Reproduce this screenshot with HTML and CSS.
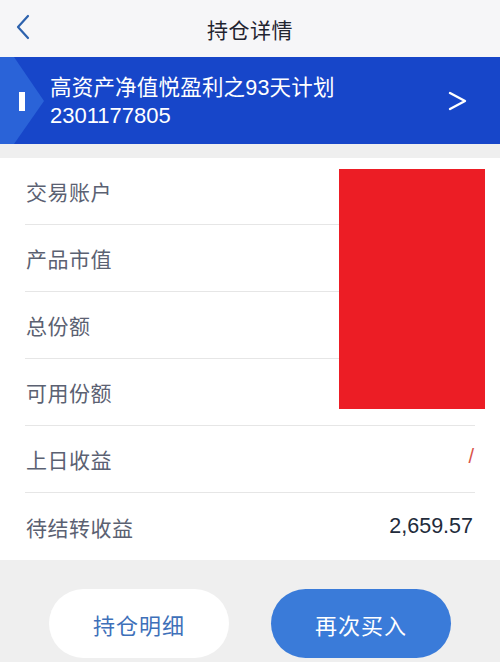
FILE: index.html
```html
<!DOCTYPE html>
<html lang="zh-CN">
<head>
  <meta charset="UTF-8" />
  <meta name="viewport" content="width=device-width, initial-scale=1.0"/>
  <title>持仓详情</title>
  <link rel="stylesheet" href="styles.css">
</head>
<body>
  <div class="navbar">
    <svg class="back" width="14" height="26" viewBox="0 0 14 26">
      <polyline points="12,2 2,13 12,24" fill="none" stroke="#2d62ad" stroke-width="2.2" stroke-linecap="round" stroke-linejoin="round"/>
    </svg>
    <div class="title">持仓详情</div>
  </div>

  <div class="banner">
    <svg class="banner-tab" width="46" height="87" viewBox="0 0 46 87">
      <polygon points="0,0 14,0 44,44 14,87 0,87" fill="#2a63d8"/>
      <rect x="19" y="35" width="6" height="19" fill="#ffffff"/>
    </svg>
    <div class="banner-text">
      <div class="product-name">高资产净值悦盈利之93天计划</div>
      <div class="product-code">2301177805</div>
    </div>
    <svg class="arrow" width="20" height="20" viewBox="0 0 20 20">
      <polyline points="2,2 17,10 2,18" fill="none" stroke="#ffffff" stroke-width="2.4" stroke-linecap="round" stroke-linejoin="round"/>
    </svg>
  </div>

  <div class="list">
    <div class="row"><span class="label">交易账户</span></div>
    <div class="row"><span class="label">产品市值</span></div>
    <div class="row"><span class="label">总份额</span></div>
    <div class="row"><span class="label">可用份额</span></div>
    <div class="row"><span class="label">上日收益</span><span class="value red">/</span></div>
    <div class="row row-last"><span class="label">待结转收益</span><span class="value">2,659.57</span></div>
    <div class="mask"></div>
  </div>

  <div class="footer">
    <button class="btn btn-light">持仓明细</button>
    <button class="btn btn-blue">再次买入</button>
  </div>
</body>
</html>
```

FILE: styles.css
```css
body {
  margin: 0;
  background: #efefef;
  font-family: "Liberation Sans", "Noto Sans CJK SC", sans-serif;
  width: 500px;
  height: 662px;
  overflow: hidden;
}
.navbar {
  height: 57px;
  background: #f6f6f8;
  display: flex;
  align-items: center;
  justify-content: center;
  position: relative;
}
.back {
  position: absolute;
  left: 16px;
  top: 14px;
}
.title {
  font-size: 21px;
  color: #1f2430;
  letter-spacing: 0.5px;
}
.banner {
  height: 87px;
  background: #1746c9;
  display: flex;
  align-items: center;
  position: relative;
  padding-left: 50px;
  padding-right: 32px;
}
.banner-tab {
  position: absolute;
  left: 0;
  top: 0;
}
.banner-text {
  flex: 1;
  color: #ffffff;
  padding-top: 2px;
}
.product-name {
  font-size: 21.5px;
  line-height: 27px;
  letter-spacing: 0.2px;
}
.product-code {
  font-size: 22px;
  line-height: 27px;
}
.list {
  margin-top: 14px;
  background: #ffffff;
  position: relative;
}
.row {
  height: 66px;
  margin: 0 25px;
  border-bottom: 1px solid #e6e6e6;
  display: flex;
  align-items: center;
  justify-content: space-between;
}
.row-last {
  border-bottom: none;
  height: 67px;
}
.label {
  font-size: 21px;
  color: #5b6172;
  letter-spacing: 0.5px;
  padding-left: 1px;
}
.value {
  font-size: 21.5px;
  color: #222b3b;
  padding-right: 2px;
}
.value.red {
  color: #d9544a;
  font-size: 20px;
  margin-top: -6px;
  padding-right: 1px;
}
.mask {
  position: absolute;
  left: 339px;
  top: 11px;
  width: 146px;
  height: 240px;
  background: #ec1d25;
}
.footer {
  display: flex;
  justify-content: center;
  gap: 42px;
  padding-top: 29px;
}
.btn {
  width: 180px;
  height: 69px;
  border: none;
  border-radius: 35px;
  font-family: "Noto Sans CJK SC", sans-serif;
  font-size: 22px;
  letter-spacing: 1px;
}
.btn-light {
  background: #ffffff;
  color: #3e70b9;
}
.btn-blue {
  background: #3a7bd9;
  color: #ffffff;
}
```
